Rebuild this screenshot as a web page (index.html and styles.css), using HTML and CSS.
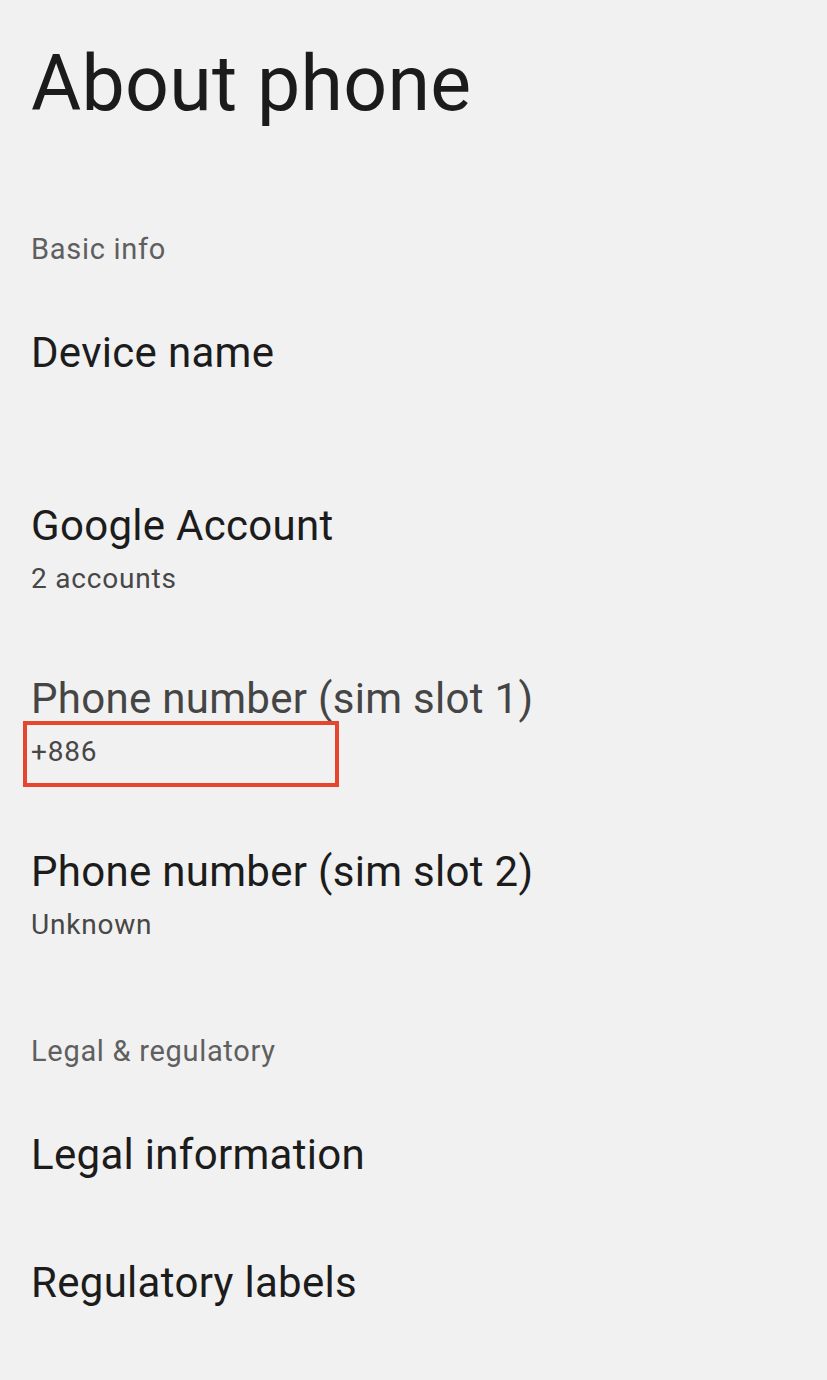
FILE: index.html
```html
<!DOCTYPE html>
<html lang="en">
<head>
<meta charset="utf-8">
<title>About phone</title>
<link rel="stylesheet" href="styles.css">
</head>
<body>
<main class="page">
  <h1 class="page-title">About phone</h1>

  <section class="group">
    <h2 class="group-header group-header--first">Basic info</h2>
    <div class="item">
      <div class="item-title">Device name</div>
      <div class="item-summary">&nbsp;</div>
    </div>
    <div class="item">
      <div class="item-title">Google Account</div>
      <div class="item-summary">2 accounts</div>
    </div>
    <div class="item">
      <div class="item-title item-title--muted">Phone number (sim slot 1)</div>
      <div class="item-summary item-summary--marked">+886<span class="highlight-box"></span></div>
    </div>
    <div class="item">
      <div class="item-title">Phone number (sim slot 2)</div>
      <div class="item-summary">Unknown</div>
    </div>
  </section>

  <section class="group">
    <h2 class="group-header">Legal &amp; regulatory</h2>
    <div class="item">
      <div class="item-title">Legal information</div>
    </div>
    <div class="item item--last">
      <div class="item-title">Regulatory labels</div>
    </div>
  </section>
</main>
</body>
</html>
```

FILE: styles.css
```css
html, body {
  margin: 0;
  padding: 0;
  background: #f1f1f1;
}

body {
  font-family: Roboto, "Noto Sans", "Liberation Sans", sans-serif;
  color: #1c1c1c;
  width: 827px;
  height: 1380px;
  overflow: hidden;
}

.page {
  padding: 39px 24px 0 31px;
}

.page-title {
  margin: 0;
  font-size: 77px;
  line-height: 90px;
  font-weight: 400;
  color: #1b1b1b;
  letter-spacing: 0.3px;
}

.group-header {
  margin: 0;
  padding: 49px 0 21px;
  font-size: 29px;
  line-height: 40px;
  font-weight: 400;
  color: #5f5f5f;
  letter-spacing: 0.7px;
}

.group-header--first {
  padding-top: 100px;
}

.item {
  padding: 39px 0;
  display: flex;
  flex-direction: column;
  gap: 11px;
}

.item--last {
  padding-top: 41px;
}

.item-title {
  font-size: 42px;
  line-height: 48px;
  color: #1c1c1c;
  letter-spacing: 0.3px;
}

.item-title--muted {
  color: #454545;
}

.item-summary {
  font-size: 28px;
  line-height: 36px;
  color: #474747;
  letter-spacing: 0.8px;
}

.item-summary--marked {
  position: relative;
}

.highlight-box {
  position: absolute;
  left: -8px;
  top: -13px;
  width: 308px;
  height: 58px;
  border: 4px solid #e6462e;
}
```
